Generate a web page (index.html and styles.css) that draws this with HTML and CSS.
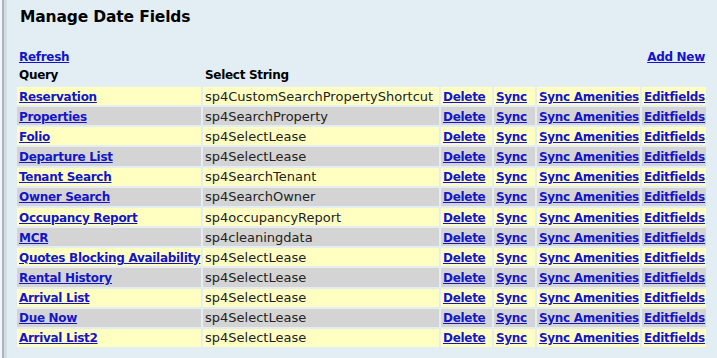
FILE: index.html
```html
<!DOCTYPE html>
<html lang="en">
<head>
    <meta charset="UTF-8">
    <title>Manage Date Fields</title>
    <link rel="stylesheet" href="styles.css">
</head>
<body>

<div class="frame">
    <h2 class="title">Manage Date Fields</h2>

    <table class="grid">
        <tr class="tools">
            <td colspan="2"><a href="#">Refresh</a></td>
            <td colspan="4" class="right"><a href="#">Add New</a></td>
        </tr>
        <tr class="head">
            <th class="c-query">Query</th>
            <th class="c-select">Select String</th>
            <th class="c-del"></th>
            <th class="c-sync"></th>
            <th class="c-amen"></th>
            <th class="c-edit"></th>
        </tr>
        <tr class="odd">
            <td><a href="#">Reservation</a></td>
            <td>sp4CustomSearchPropertyShortcut</td>
            <td><a href="#">Delete</a></td>
            <td><a href="#">Sync</a></td>
            <td><a href="#">Sync Amenities</a></td>
            <td><a href="#">Editfields</a></td>
        </tr>
        <tr class="even">
            <td><a href="#">Properties</a></td>
            <td>sp4SearchProperty</td>
            <td><a href="#">Delete</a></td>
            <td><a href="#">Sync</a></td>
            <td><a href="#">Sync Amenities</a></td>
            <td><a href="#">Editfields</a></td>
        </tr>
        <tr class="odd">
            <td><a href="#">Folio</a></td>
            <td>sp4SelectLease</td>
            <td><a href="#">Delete</a></td>
            <td><a href="#">Sync</a></td>
            <td><a href="#">Sync Amenities</a></td>
            <td><a href="#">Editfields</a></td>
        </tr>
        <tr class="even">
            <td><a href="#">Departure List</a></td>
            <td>sp4SelectLease</td>
            <td><a href="#">Delete</a></td>
            <td><a href="#">Sync</a></td>
            <td><a href="#">Sync Amenities</a></td>
            <td><a href="#">Editfields</a></td>
        </tr>
        <tr class="odd">
            <td><a href="#">Tenant Search</a></td>
            <td>sp4SearchTenant</td>
            <td><a href="#">Delete</a></td>
            <td><a href="#">Sync</a></td>
            <td><a href="#">Sync Amenities</a></td>
            <td><a href="#">Editfields</a></td>
        </tr>
        <tr class="even">
            <td><a href="#">Owner Search</a></td>
            <td>sp4SearchOwner</td>
            <td><a href="#">Delete</a></td>
            <td><a href="#">Sync</a></td>
            <td><a href="#">Sync Amenities</a></td>
            <td><a href="#">Editfields</a></td>
        </tr>
        <tr class="odd">
            <td><a href="#">Occupancy Report</a></td>
            <td>sp4occupancyReport</td>
            <td><a href="#">Delete</a></td>
            <td><a href="#">Sync</a></td>
            <td><a href="#">Sync Amenities</a></td>
            <td><a href="#">Editfields</a></td>
        </tr>
        <tr class="even">
            <td><a href="#">MCR</a></td>
            <td>sp4cleaningdata</td>
            <td><a href="#">Delete</a></td>
            <td><a href="#">Sync</a></td>
            <td><a href="#">Sync Amenities</a></td>
            <td><a href="#">Editfields</a></td>
        </tr>
        <tr class="odd">
            <td><a href="#">Quotes Blocking Availability</a></td>
            <td>sp4SelectLease</td>
            <td><a href="#">Delete</a></td>
            <td><a href="#">Sync</a></td>
            <td><a href="#">Sync Amenities</a></td>
            <td><a href="#">Editfields</a></td>
        </tr>
        <tr class="even">
            <td><a href="#">Rental History</a></td>
            <td>sp4SelectLease</td>
            <td><a href="#">Delete</a></td>
            <td><a href="#">Sync</a></td>
            <td><a href="#">Sync Amenities</a></td>
            <td><a href="#">Editfields</a></td>
        </tr>
        <tr class="odd">
            <td><a href="#">Arrival List</a></td>
            <td>sp4SelectLease</td>
            <td><a href="#">Delete</a></td>
            <td><a href="#">Sync</a></td>
            <td><a href="#">Sync Amenities</a></td>
            <td><a href="#">Editfields</a></td>
        </tr>
        <tr class="even">
            <td><a href="#">Due Now</a></td>
            <td>sp4SelectLease</td>
            <td><a href="#">Delete</a></td>
            <td><a href="#">Sync</a></td>
            <td><a href="#">Sync Amenities</a></td>
            <td><a href="#">Editfields</a></td>
        </tr>
        <tr class="odd">
            <td><a href="#">Arrival List2</a></td>
            <td>sp4SelectLease</td>
            <td><a href="#">Delete</a></td>
            <td><a href="#">Sync</a></td>
            <td><a href="#">Sync Amenities</a></td>
            <td><a href="#">Editfields</a></td>
        </tr>
    </table>
</div>

</body>
</html>
```

FILE: styles.css
```css
html, body {
    margin: 0;
    height: 100%;
}

body {
    font-family: "DejaVu Sans", Verdana, sans-serif;
    font-size: 13px;
    color: #222;
    background-color: #f2f6f9;
    overflow: hidden;
}

.frame {
    margin-left: 2px;
    border-left: 2px solid #a9b5c1;
    box-shadow: inset 3px 0 0 #d2dee6;
    background-color: #e2eef4;
    min-height: 100%;
    padding-left: 11px;
}

.title {
    margin: 0;
    padding: 8px 0 0 5px;
    height: 38px;
    font-size: 15.5px;
    letter-spacing: -0.15px;
    color: #000;
}

.grid {
    border-collapse: separate;
    border-spacing: 2px;
}

.grid td,
.grid th {
    padding: 0 1px 0 2px;
    height: 18.17px;
    text-align: left;
    white-space: nowrap;
}

.grid td:first-child,
.grid th:first-child {
    padding-right: 0;
}

.grid a,
.grid th {
    font-size: 12px;
    letter-spacing: -0.3px;
}

.grid a {
    color: #1414c8;
    font-weight: bold;
}

.tools td {
    height: 16px;
}

.head th {
    color: #000;
    height: 17px;
    vertical-align: top;
    padding-top: 2px;
}

.right {
    text-align: right !important;
}

.c-query { width: 182px; }
.c-select { width: 233px; }
.c-del { width: 48px; }
.c-sync { width: 38px; }
.c-amen { width: 100px; }
.c-edit { width: 60px; }

.odd td {
    background-color: #ffffc2;
}

.even td {
    background-color: #d4d4d4;
}
```
